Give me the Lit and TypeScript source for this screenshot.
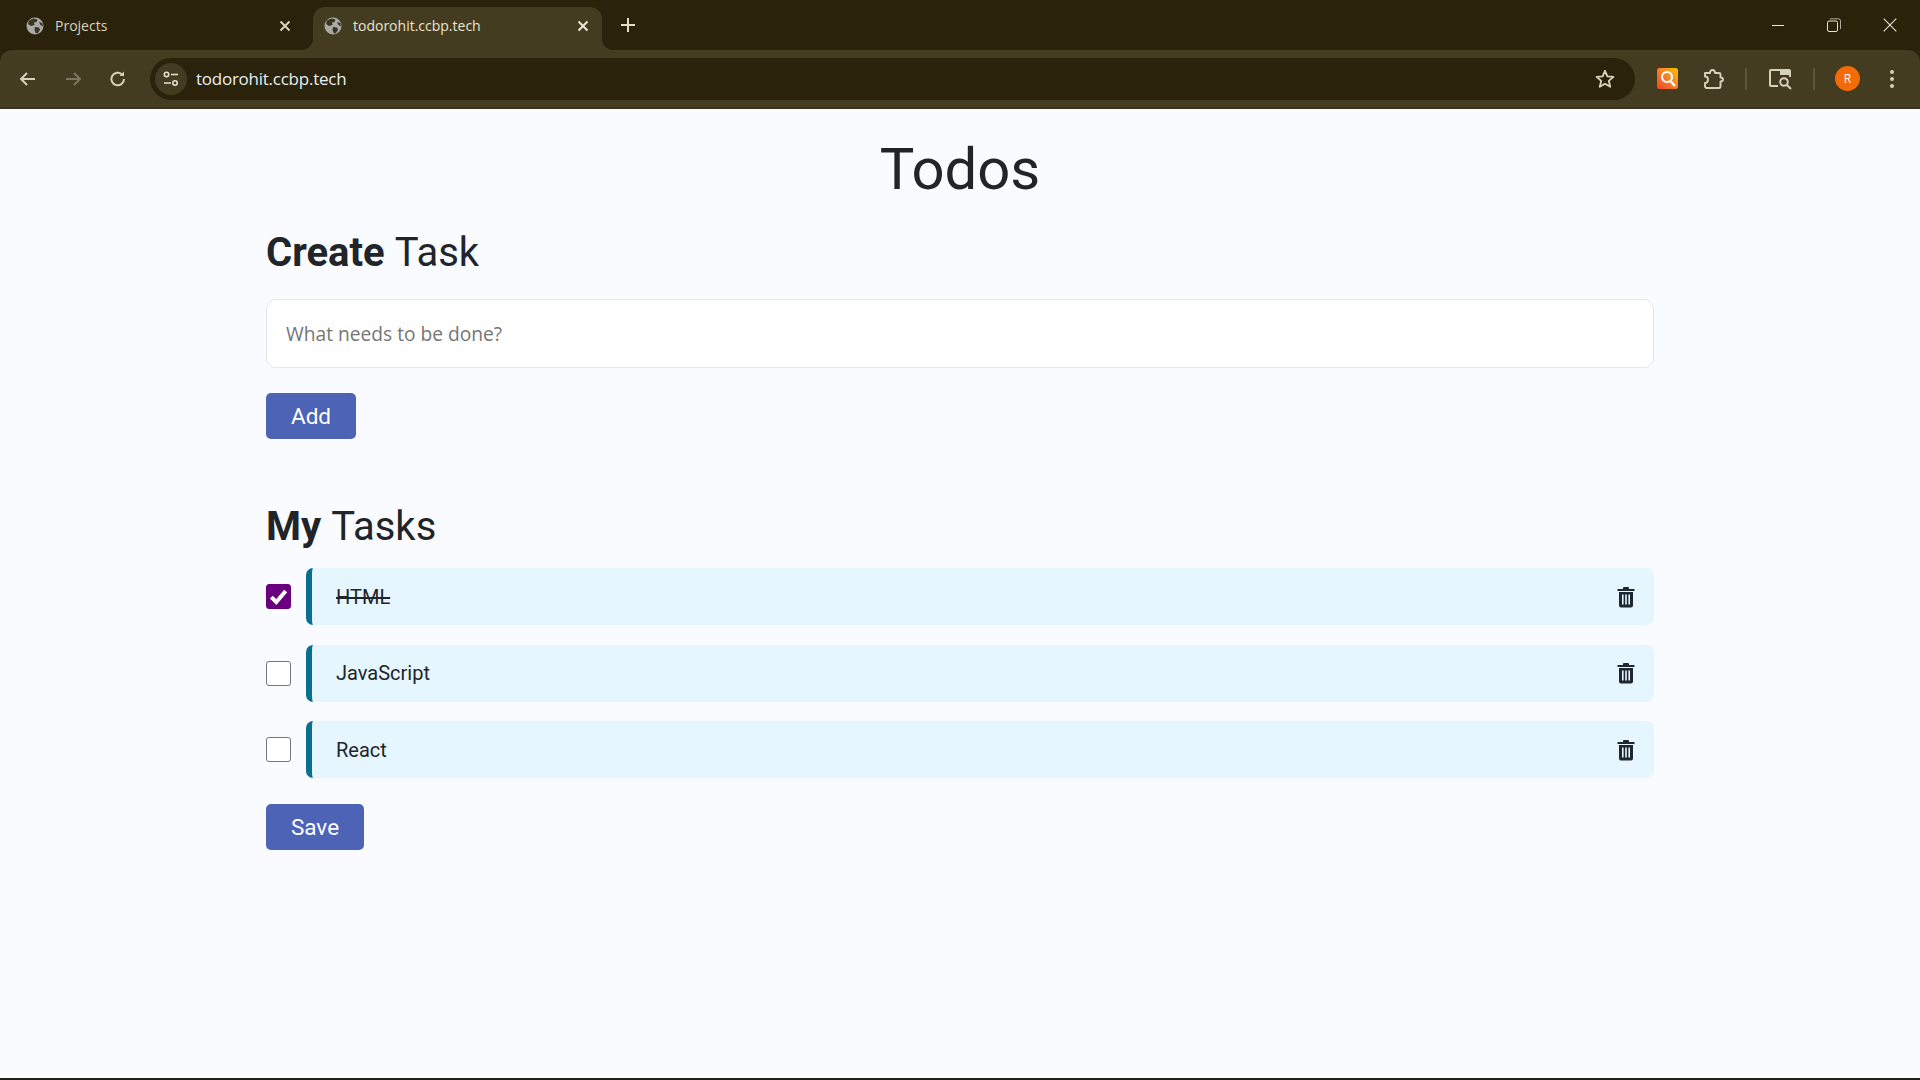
import { LitElement, html, css } from "lit";
import { customElement } from "lit/decorators.js";

const globe = html`<svg class="globe" viewBox="0 0 18 18"><circle cx="9" cy="9" r="8.5" fill="#a9a9a6"/><path d="M3 3.5 L7.5 1.5 L11.5 2.5 L10.5 5 L8 5.5 L8.5 8 L5 9 L2 7 Z M9 10 L13 10.5 L14 13 L11.5 16.5 L9.5 16 L8.5 12.5 Z M13 5 L16.5 6 L16.8 9.5 L14.5 8 Z" fill="#3b3520"/></svg>`;
const trash = html`<svg class="trash" viewBox="0 0 18 22"><path d="M6 3 V2 Q6 1 7 1 H11 Q12 1 12 2 V3 H17.5 V5 H.5 V3 Z" fill="#1f2733"/><path d="M2 6 H16 V19.5 Q16 21.5 14 21.5 H4 Q2 21.5 2 19.5 Z M5 8.5 V18.5 H6.6 V8.5 Z M8.2 8.5 V18.5 H9.8 V8.5 Z M11.4 8.5 V18.5 H13 V8.5 Z" fill-rule="evenodd" fill="#1f2733"/></svg>`;

@customElement("app-root")
export class AppRoot extends LitElement {
  static styles = css`
    :host { display: flex; flex-direction: column; height: 1080px; background: #f9fbfe; font-family: Roboto, sans-serif; color: #212529; overflow: hidden; }
    * { box-sizing: border-box; }
    .chrome { background: #2a220a; flex: none; }
    .tabstrip { height: 50px; display: flex; align-items: flex-end; color: #d8d3bd; font-family: "Open Sans", sans-serif; font-size: 14px; }
    .tab { height: 43px; display: flex; align-items: center; padding: 0 8px 6px 20px; flex: none; position: relative; }
    .tab.one { width: 313px; padding-left: 26px; padding-right: 22px; }
    .tab.two { width: 289px; background: #443c21; border-radius: 12px 12px 0 0; color: #e8e4d0; padding-left: 11px; padding-right: 13px; }
    .tab.two::before, .tab.two::after { content: ""; position: absolute; bottom: 0; width: 12px; height: 12px; }
    .tab.two::before { left: -12px; background: radial-gradient(circle at 0 0, transparent 12px, #443c21 12.5px); }
    .tab.two::after { right: -12px; background: radial-gradient(circle at 100% 0, transparent 12px, #443c21 12.5px); }
    .globe { width: 18px; height: 18px; flex: none; margin-right: 11px; }
    .title { flex: 1; white-space: nowrap; }
    .x { width: 12px; height: 12px; flex: none; }
    .plus { width: 14px; height: 14px; margin: 0 0 18px 19px; flex: none; }
    .winbtns { margin-left: auto; display: flex; align-items: center; gap: 42px; padding: 0 23px 0 0; height: 50px; }
    .winbtns svg { display: block; }
    .toolbar { height: 59px; background: #443c21; border-radius: 12px 12px 0 0; border-bottom: 2px solid #39331e; display: flex; align-items: center; padding-left: 17px; }
    .navicon { width: 22px; height: 22px; flex: none; }
    .nav { display: flex; gap: 23px; margin-right: 21px; }
    .omni { width: 1485px; height: 42px; background: #2a220a; border-radius: 21px; display: flex; align-items: center; padding: 0 19px 0 5px; flex: none; color: #e9f0f0; font-family: "Open Sans", sans-serif; font-size: 17px; letter-spacing: -0.25px; }
    .tune { width: 32px; height: 32px; border-radius: 50%; background: #443c21; display: flex; align-items: center; justify-content: center; margin-right: 9px; flex: none; }
    .omni .url { flex: 1; }
    .tools { display: flex; align-items: center; flex: 1; padding-left: 22px; }
    .ext { flex: none; margin-right: 24px; }
    .puzzle { flex: none; margin-right: 21px; }
    .panel { flex: none; margin: 0 20px 0 22px; }
    .dots { flex: none; margin-left: 29px; }
    .sep { width: 2px; height: 22px; background: #5d5538; flex: none; }
    .avatar { width: 25px; height: 25px; border-radius: 50%; background: #f26b05; color: #fff; font-size: 12px; display: flex; align-items: center; justify-content: center; flex: none; font-family: "Open Sans", sans-serif; margin-left: 20px; }
    .page { flex: 1; display: flex; flex-direction: column; align-items: center; border-bottom: 2px solid #232015; }
    .wrap { width: 1388px; display: flex; flex-direction: column; }
    h1 { font-size: 58px; font-weight: 400; line-height: 70px; margin: 0; text-align: center; padding-top: 25px; }
    h2 { font-size: 40px; font-weight: 400; line-height: 48px; margin: 0; word-spacing: 1px; }
    h2 b { font-weight: 700; }
    .h-create { margin-top: 25px; }
    .input { margin-top: 22px; height: 69px; background: #fff; border: 1px solid #e4e7ec; border-radius: 10px; padding: 0 19px; display: flex; align-items: center; font: 400 19.2px "Open Sans", sans-serif; color: #757575; }
    .btn { height: 46px; border-radius: 5px; background: #4c63b6; color: #fff; display: flex; align-items: center; justify-content: center; align-self: flex-start; font-size: 22.5px; font-family: Roboto, sans-serif; font-weight: 400; }
    .add { width: 90px; margin-top: 25px; }
    .save { width: 98px; margin-top: 25.5px; }
    .h-tasks { margin-top: 64px; }
    .rows { display: flex; flex-direction: column; gap: 19.6px; margin-top: 17px; }
    .row { display: flex; align-items: center; height: 57px; gap: 15px; }
    .cb { width: 25px; height: 25px; border: 1px solid #767676; border-radius: 3px; background: #fff; flex: none; display: flex; align-items: center; justify-content: center; }
    .cb.on { background: #6a007f; border-color: #6a007f; }
    .item { flex: 1; height: 57px; background: #e6f6ff; border-left: 6px solid #096f92; border-radius: 7px; display: flex; align-items: center; justify-content: space-between; padding: 0 19px 0 24px; font-size: 20px; }
    .item .done { text-decoration: line-through; }
    .trash { width: 18px; height: 22px; display: block; }
  `;

  private x(c: string) {
    return html`<svg class="x" viewBox="0 0 12 12"><path d="M1.5 1.5 L10.5 10.5 M10.5 1.5 L1.5 10.5" stroke="${c}" stroke-width="2" fill="none"/></svg>`;
  }

  render() {
    const tasks = [
      { t: "HTML", d: true },
      { t: "JavaScript", d: false },
      { t: "React", d: false },
    ];
    return html`
      <div class="chrome">
      <div class="tabstrip">
        <div class="tab one">${globe}<span class="title">Projects</span>${this.x("#d8d3bd")}</div>
        <div class="tab two">${globe}<span class="title">todorohit.ccbp.tech</span>${this.x("#ebe7d3")}</div>
        <svg class="plus" viewBox="0 0 14 14"><path d="M7 0 V14 M0 7 H14" stroke="#e4dfc8" stroke-width="2"/></svg>
        <div class="winbtns">
          <svg width="14" height="14" viewBox="0 0 14 14"><path d="M1 7.5 H13" stroke="#e8e4d6" stroke-width="1"/></svg>
          <svg width="14" height="14" viewBox="0 0 14 14" fill="none" stroke="#e8e4d6"><rect x=".5" y="3" width="10" height="10.5" rx="1.5"/><path d="M3 .8 H11.5 Q13.5 .8 13.5 2.8 V11" stroke-opacity=".7"/></svg>
          <svg width="14" height="14" viewBox="0 0 14 14"><path d="M.7 .7 L13.3 13.3 M13.3 .7 L.7 13.3" stroke="#e8e4d6" stroke-width="1.1"/></svg>
        </div>
      </div>
      <div class="toolbar">
        <div class="nav">
          <svg class="navicon" viewBox="0 0 22 22" fill="none" stroke="#d6d1ba" stroke-width="2"><path d="M18 11 H4 M10 5 L4 11 L10 17"/></svg>
          <svg class="navicon" viewBox="0 0 22 22" fill="none" stroke="#7d7660" stroke-width="2"><path d="M4 11 H18 M12 5 L18 11 L12 17"/></svg>
          <svg class="navicon" viewBox="0 0 22 22" fill="none" stroke="#d6d1ba" stroke-width="2"><path d="M17 11 A6.3 6.3 0 1 1 15 6.4"/><path d="M17 3.5 V8 H12.5 Z" fill="#d6d1ba" stroke="none"/></svg>
        </div>
        <div class="omni">
          <div class="tune"><svg width="18" height="18" viewBox="0 0 18 18" fill="none" stroke="#e6e1cd" stroke-width="1.6"><circle cx="4.5" cy="4.5" r="2.2"/><path d="M9 4.5 H16 M2 13 H9"/><circle cx="13" cy="13" r="2.2"/></svg></div>
          <span class="url">todorohit.ccbp.tech</span>
          <svg width="22" height="22" viewBox="0 0 22 22" fill="none" stroke="#d6d1ba" stroke-width="1.9"><path d="M11 2.8 L13.4 8.4 L19.4 8.9 L14.8 12.9 L16.2 18.8 L11 15.7 L5.8 18.8 L7.2 12.9 L2.6 8.9 L8.6 8.4 Z" stroke-linejoin="round"/></svg>
        </div>
        <div class="tools">
          <svg class="ext" width="21" height="21" viewBox="0 0 21 21"><defs><linearGradient id="g" x1="0" y1="1" x2="1" y2="0"><stop offset="0" stop-color="#f0452f"/><stop offset=".6" stop-color="#f98a22"/><stop offset="1" stop-color="#ffc400"/></linearGradient></defs><rect width="21" height="21" rx="2.5" fill="url(#g)"/><circle cx="10" cy="9" r="5" fill="none" stroke="#fff" stroke-width="2.2"/><path d="M13.5 13 L18 18" stroke="#fff" stroke-width="2.4"/></svg>
          <svg class="puzzle" width="22" height="22" viewBox="0 0 22 22" fill="none" stroke="#d6d1ba" stroke-width="1.9"><path d="M3 5 H8 Q8 2 10.5 2 Q13 2 13 5 H17 Q18.500 5 18.500 6.500 V9.500 Q21 9.500 21 11.500 Q21 13.500 18.500 13.500 V18 Q18.500 20 17 20 H5 Q3 20 3 18 V15 Q6 15 6 11.500 Q6 8.500 3 8.500 Z" stroke-linejoin="round"/></svg>
          <div class="sep"></div>
          <svg class="panel" width="24" height="22" viewBox="0 0 24 22" fill="none" stroke="#d6d1ba" stroke-width="2"><path d="M9 18 H2 Q1 18 1 17 V3 Q1 2 2 2 H20 Q21 2 21 3 V9"/><path d="M11 3 H21 V7 H11 Z" fill="#d6d1ba" stroke="none"/><circle cx="15" cy="14" r="3.8"/><path d="M18 17 L22 21"/></svg>
          <div class="sep"></div>
          <div class="avatar">R</div>
          <svg class="dots" width="6" height="20" viewBox="0 0 6 20" fill="#d6d1ba"><circle cx="3" cy="3" r="2"/><circle cx="3" cy="10" r="2"/><circle cx="3" cy="17" r="2"/></svg>
        </div>
      </div>
      </div>
      <div class="page">
        <div class="wrap">
          <h1>Todos</h1>
          <h2 class="h-create"><b>Create</b> Task</h2>
          <div class="input">What needs to be done?</div>
          <div class="btn add">Add</div>
          <h2 class="h-tasks"><b>My</b> Tasks</h2>
          <div class="rows">
            ${tasks.map((t) => html`
              <div class="row">
                <div class="cb ${t.d ? "on" : ""}">
                  ${t.d ? html`<svg width="21" height="21" viewBox="0 0 19 19"><path d="M3 10 L7.500 14.500 L16 4.500" fill="none" stroke="#fff" stroke-width="3.6"/></svg>` : ""}
                </div>
                <div class="item"><span class="${t.d ? "done" : ""}">${t.t}</span>${trash}</div>
              </div>`)}
          </div>
          <div class="btn save">Save</div>
        </div>
      </div>
    `;
  }
}
